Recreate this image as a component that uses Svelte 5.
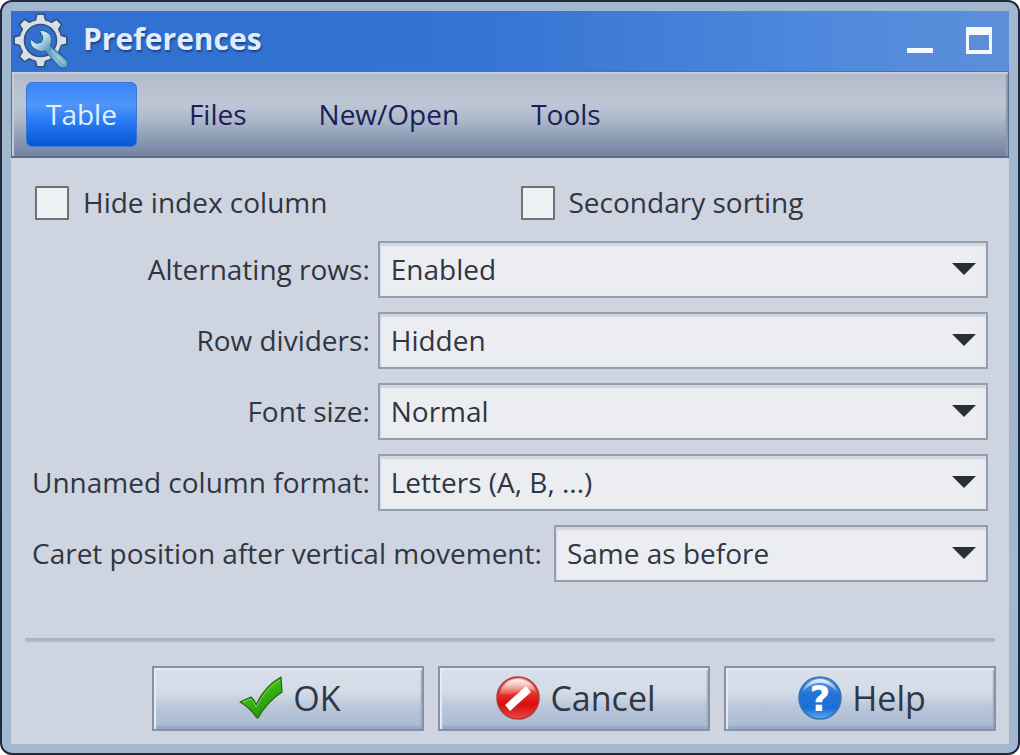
<script lang="ts">
  const tabs = ['Table', 'Files', 'New/Open', 'Tools'];
  let activeTab = 'Table';

  let hideIndex = false;
  let secondarySorting = false;

  const settings = [
    { id: 'alternating', label: 'Alternating rows:', value: 'Enabled', options: ['Enabled', 'Disabled'] },
    { id: 'dividers', label: 'Row dividers:', value: 'Hidden', options: ['Hidden', 'Visible'] },
    { id: 'font-size', label: 'Font size:', value: 'Normal', options: ['Small', 'Normal', 'Large'] },
    { id: 'unnamed', label: 'Unnamed column format:', value: 'Letters (A, B, ...)', options: ['Letters (A, B, ...)', 'Numbers (1, 2, ...)'] }
  ];

  const caretOptions = ['Same as before', 'Start of cell', 'End of cell'];
  let caret = 'Same as before';

  const teeth = [0, 45, 90, 135, 180, 225, 270, 315];
</script>

<div class="window">
  <header class="titlebar">
    <svg class="app-icon" viewBox="0 0 56 56" aria-hidden="true">
      <defs>
        <linearGradient id="steel" x1="0" y1="0" x2="1" y2="1">
          <stop offset="0" stop-color="#b4dcee" />
          <stop offset="0.25" stop-color="#c6e6f4" />
          <stop offset="0.5" stop-color="#5f98bf" />
          <stop offset="0.75" stop-color="#86bcd6" />
          <stop offset="1" stop-color="#5a94b8" />
        </linearGradient>
      </defs>
      <!-- dark outline first, light body on top -->
      <g fill="#3a5070">
        {#each teeth as angle}
          <path d="M21 10l2-9.500h9L34 10z" transform="rotate({angle} 27.500 27.500)" />
        {/each}
      </g>
      <circle cx="27.500" cy="27.500" r="18.500" fill="none" stroke="#3a5070" stroke-width="6.500" />
      <g fill="#d6dfed">
        {#each teeth as angle}
          <path d="M22.500 10l2-8h6l2 8z" transform="rotate({angle} 27.500 27.500)" />
        {/each}
      </g>
      <circle cx="27.500" cy="27.500" r="18.700" fill="none" stroke="#d6dfed" stroke-width="3.800" />
      <path
        d="M26.500 18c2-1 4-.500 6 .500 4 1.500 6 4.500 6 8 0 2.500-.500 4.500-1 6.500L54.500 48c1 2 .500 5-1 6.500-2 .800-5 .800-6.500 0L32 38c-3 1-6 .500-8-1-4-1.500-6-4-6.500-7 0-1.500-.500-3 0-4l5 4c2 .500 4 0 6-1 1-2 1.500-4 1-6z"
        fill="url(#steel)"
        stroke="#2c5a8c"
        stroke-width="1"
        stroke-linejoin="round"
      />
      <path d="M39 38l12 12" stroke="#b4dcee" stroke-width="2" stroke-linecap="round" opacity="0.5" />
    </svg>
    <h1>Preferences</h1>
    <div class="window-controls">
      <button type="button" aria-label="Minimize">
        <svg viewBox="0 0 28 28"><path d="M1 21h26v5H1z" fill="#f4f8ff" /></svg>
      </button>
      <button type="button" aria-label="Maximize">
        <svg viewBox="0 0 28 28"><path fill-rule="evenodd" d="M1 0h26v27H1zM4 8v15h20V8z" fill="#f4f8ff" /></svg>
      </button>
    </div>
  </header>

  <nav class="tabs">
    {#each tabs as tab}
      <button type="button" class:active={tab === activeTab} on:click={() => (activeTab = tab)}>{tab}</button>
    {/each}
  </nav>

  <main>
    <div class="checks">
      <label><input type="checkbox" bind:checked={hideIndex} /><span>Hide index column</span></label>
      <label><input type="checkbox" bind:checked={secondarySorting} /><span>Secondary sorting</span></label>
    </div>

    <div class="settings">
      {#each settings as setting}
        <label for={setting.id}>{setting.label}</label>
        <div class="select">
          <select id={setting.id} bind:value={setting.value}>
            {#each setting.options as option}
              <option value={option}>{option}</option>
            {/each}
          </select>
          <svg viewBox="0 0 24 12" aria-hidden="true"><path d="M0 0h24L12 12z" /></svg>
        </div>
      {/each}
    </div>

    <div class="caret-row">
      <label for="caret">Caret position after vertical movement:</label>
      <div class="select">
        <select id="caret" bind:value={caret}>
          {#each caretOptions as option}
            <option value={option}>{option}</option>
          {/each}
        </select>
        <svg viewBox="0 0 24 12" aria-hidden="true"><path d="M0 0h24L12 12z" /></svg>
      </div>
    </div>
  </main>

  <hr />

  <footer>
    <button type="button">
      <svg viewBox="0 0 44 44" aria-hidden="true">
        <defs>
          <linearGradient id="check" x1="0" y1="0" x2="0.6" y2="1">
            <stop offset="0" stop-color="#64d62e" />
            <stop offset="0.5" stop-color="#3cb814" />
            <stop offset="1" stop-color="#209008" />
          </linearGradient>
        </defs>
        <path
          d="M1 26l11-5c2 2 4 4 5 8C22 18 31 7 42 1l1 15C34 22 25 31 19 42h-1C14 36 8 30 1 26z"
          fill="url(#check)"
          stroke="#2a6218"
          stroke-width="1.200"
          stroke-linejoin="round"
        />
        <path d="M4 26l8-3c2 2 4 5 5 8C23 20 31 10 41 4" fill="none" stroke="#74d848" stroke-width="1" />
      </svg>
      OK
    </button>
    <button type="button">
      <svg viewBox="0 0 44 44" aria-hidden="true">
        <defs>
          <linearGradient id="red" x1="0" y1="0" x2="0" y2="1">
            <stop offset="0" stop-color="#f5a09a" />
            <stop offset="0.35" stop-color="#e83a36" />
            <stop offset="0.65" stop-color="#d80d0d" />
            <stop offset="1" stop-color="#e84a42" />
          </linearGradient>
          <linearGradient id="shine" x1="0" y1="0" x2="0" y2="1">
            <stop offset="0" stop-color="#fff" stop-opacity="0.9" />
            <stop offset="1" stop-color="#fff" stop-opacity="0.1" />
          </linearGradient>
        </defs>
        <circle cx="22" cy="22" r="21" fill="url(#red)" stroke="#b23a3e" stroke-width="1.500" />
        <path d="M4 18C6 8 14 3 22 3s16 5 18 13c-8-5-16 0-24 2-5 1-9 1-12 0z" fill="url(#shine)" />
        <path d="M30 10l5 6-21 19-5-6z" fill="#fff" />
      </svg>
      Cancel
    </button>
    <button type="button">
      <svg viewBox="0 0 44 44" aria-hidden="true">
        <defs>
          <linearGradient id="blue" x1="0" y1="0" x2="0" y2="1">
            <stop offset="0" stop-color="#5a9de2" />
            <stop offset="0.4" stop-color="#2573d6" />
            <stop offset="0.75" stop-color="#196fd8" />
            <stop offset="1" stop-color="#5caaf0" />
          </linearGradient>
        </defs>
        <circle cx="22" cy="22" r="21" fill="url(#blue)" stroke="#3b72ae" stroke-width="1.500" />
        <path d="M4 17C7 8 14 3 22 3s15 5 18 14C34 10 28 7 22 7S9 10 4 17z" fill="url(#shine)" />
        <text x="22" y="35" text-anchor="middle">?</text>
      </svg>
      Help
    </button>
  </footer>
</div>

<style>
  :global(body) {
    background: #fff;
  }

  .window {
    box-sizing: border-box;
    min-height: 100vh;
    display: flex;
    flex-direction: column;
    padding: 9px;
    border: 2px solid #1f2b3d;
    border-radius: 12px;
    background: linear-gradient(#a1b8ce, #a3b7d1);
    font-family: 'Open Sans', 'Noto Sans', sans-serif;
    font-size: 28px;
    color: #303642;
  }

  button,
  select {
    font: inherit;
    color: inherit;
  }

  .titlebar {
    display: flex;
    align-items: center;
    height: 60px;
    padding: 0 16px 0 2px;
    background: linear-gradient(90deg, #3070d0 0%, #3373d3 45%, #5089dc 82%, #5c8fd8 100%);
  }

  .app-icon {
    width: 56px;
    height: 56px;
  }

  h1 {
    flex: 1;
    margin: 0 0 4px 14px;
    font-size: 30px;
    line-height: 40px;
    color: #e2ecff;
    text-shadow: 1px 2px 2px #1b4488;
  }

  .window-controls {
    display: flex;
    gap: 31px;
  }

  .window-controls button {
    padding: 0;
    border: 0;
    background: none;
  }

  .window-controls svg {
    display: block;
    width: 28px;
    height: 28px;
  }

  .tabs {
    display: flex;
    gap: 32px;
    padding: 10px 14px 9px;
    border: 1px solid #5f6f8a;
    border-bottom: 2px solid #5c6a85;
    background: linear-gradient(#b2bac9 0%, #bdc7d4 38%, #afbaca 55%, #8e9db6 78%, #73839f 100%);
    box-shadow: inset 2px 2px 1px #c5ceda, inset -2px 0 1px #8b97ab;
  }

  .tabs button {
    height: 65px;
    padding: 0 19px 2px;
    border: 1px solid transparent;
    border-radius: 6px;
    background: none;
    color: #1d1d5c;
  }

  .tabs .active {
    border-color: #3877d8;
    background: linear-gradient(#3a84f8 0%, #5096fa 35%, #287cf4 60%, #0656d2 100%);
    color: #e4efff;
  }

  main {
    flex: 1;
    padding: 26px 21px 0;
    background: #ced5e1;
  }

  .checks {
    display: grid;
    grid-template-columns: 1fr 1fr;
    gap: 18px;
    padding-left: 3px;
    margin-bottom: 19px;
  }

  .checks label {
    display: flex;
    align-items: center;
    gap: 14px;
    line-height: 36px;
  }

  label,
  label span {
    padding-bottom: 2px;
  }

  .checks label {
    padding-bottom: 0;
  }

  input {
    appearance: none;
    width: 34px;
    height: 34px;
    margin: 0;
    border: 2px solid #6d7477;
    border-radius: 1px;
    background: #eef1f3;
  }

  input:checked {
    background: #3a84f8;
  }

  .settings {
    display: grid;
    grid-template-columns: auto 1fr;
    align-items: center;
    gap: 14px 8px;
  }

  .settings label {
    text-align: right;
  }

  .caret-row {
    display: flex;
    align-items: center;
    gap: 12px;
    margin-top: 14px;
  }

  .select {
    position: relative;
    flex: 1;
  }

  select {
    appearance: none;
    display: block;
    width: 100%;
    height: 57px;
    padding: 0 44px 2px 11px;
    border: 2px solid #959eae;
    border-radius: 0;
    background: #ebedf1;
    box-shadow: inset 1px 3px 1px #d2d7e1, inset -3px -1px 1px #e2eaf4;
  }

  .select svg {
    position: absolute;
    top: 22px;
    right: 12px;
    width: 24px;
    height: 12px;
    fill: #2a2f36;
    pointer-events: none;
  }

  hr {
    box-sizing: border-box;
    width: 100%;
    height: 28px;
    margin: 0;
    border: 0;
    background: linear-gradient(#a9b1bc, #b7bec9) 14px 0 / calc(100% - 28px) 4px no-repeat #ced5e1;
  }

  footer {
    display: flex;
    justify-content: flex-end;
    gap: 14px;
    padding: 0 13px 13px;
    background: #ced5e1;
  }

  footer button {
    display: flex;
    align-items: center;
    justify-content: center;
    gap: 10px;
    width: 272px;
    height: 65px;
    padding: 0 0 2px 4px;
    border: 2px solid #8791a4;
    background: linear-gradient(#d9e0ea 0%, #d3dbe7 40%, #b9c6da 65%, #a8b9d3 100%);
    box-shadow: inset 2px 2px 1px #e6ecf3, inset -1px -3px 2px #94a8c6;
    font-size: 34px;
  }

  footer svg {
    width: 44px;
    height: 44px;
  }

  footer text {
    font-family: 'DejaVu Sans', sans-serif;
    font-size: 36px;
    font-weight: 700;
    fill: #fff;
  }
</style>
